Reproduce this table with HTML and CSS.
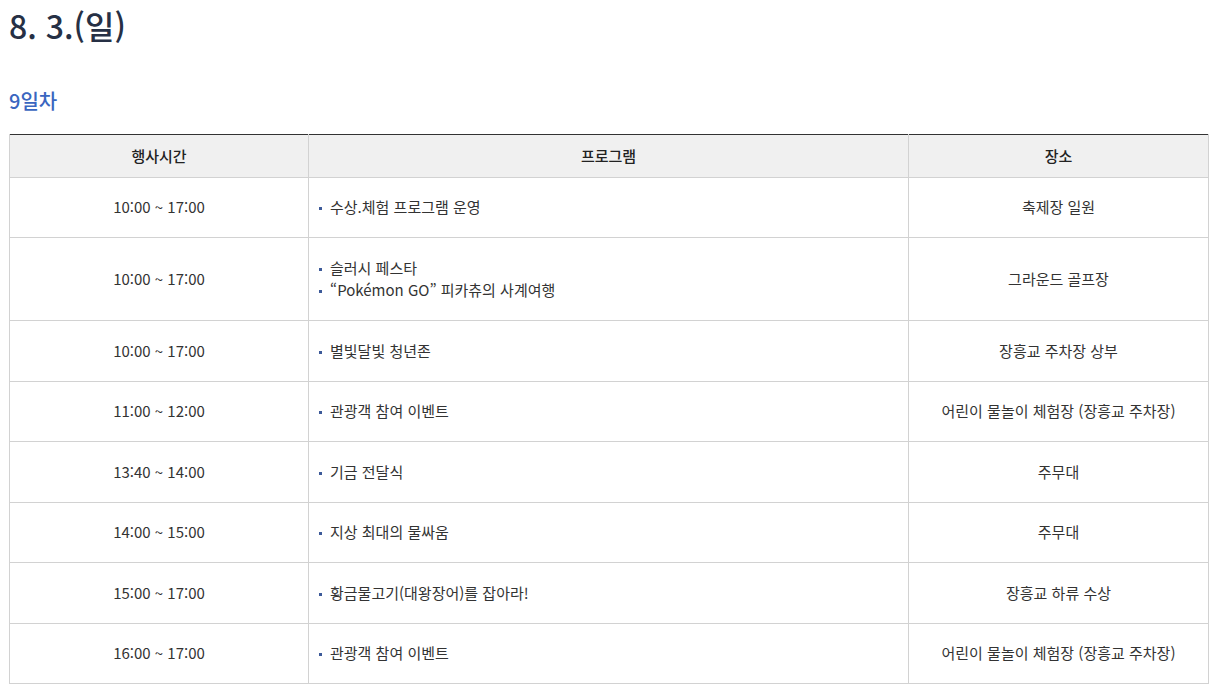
FILE: index.html
```html
<!DOCTYPE html>
<html lang="ko">
<head>
  <meta charset="UTF-8" />
  <title>8. 3.(일) 프로그램</title>
  <link rel="stylesheet" href="styles.css">
</head>
<body>

  <h2 class="dia">8. 3.(일)</h2>
  <h3 class="dia-sub">9일차</h3>

  <table class="tbl">
    <colgroup>
      <col class="c-time">
      <col class="c-prog">
      <col class="c-place">
    </colgroup>
    <thead>
      <tr>
        <th>행사시간</th>
        <th>프로그램</th>
        <th>장소</th>
      </tr>
    </thead>
    <tbody>
      <tr>
        <td>10:00 ~ 17:00</td>
        <td class="prog">
          <ul><li>수상.체험 프로그램 운영</li></ul>
        </td>
        <td>축제장 일원</td>
      </tr>
      <tr>
        <td>10:00 ~ 17:00</td>
        <td class="prog">
          <ul>
            <li>슬러시 페스타</li>
            <li>“Pokémon GO” 피카츄의 사계여행</li>
          </ul>
        </td>
        <td>그라운드 골프장</td>
      </tr>
      <tr>
        <td>10:00 ~ 17:00</td>
        <td class="prog"><ul><li>별빛달빛 청년존</li></ul></td>
        <td>장흥교 주차장 상부</td>
      </tr>
      <tr>
        <td>11:00 ~ 12:00</td>
        <td class="prog"><ul><li>관광객 참여 이벤트</li></ul></td>
        <td>어린이 물놀이 체험장 (장흥교 주차장)</td>
      </tr>
      <tr>
        <td>13:40 ~ 14:00</td>
        <td class="prog"><ul><li>기금 전달식</li></ul></td>
        <td>주무대</td>
      </tr>
      <tr>
        <td>14:00 ~ 15:00</td>
        <td class="prog"><ul><li>지상 최대의 물싸움</li></ul></td>
        <td>주무대</td>
      </tr>
      <tr>
        <td>15:00 ~ 17:00</td>
        <td class="prog"><ul><li>황금물고기(대왕장어)를 잡아라!</li></ul></td>
        <td>장흥교 하류 수상</td>
      </tr>
      <tr>
        <td>16:00 ~ 17:00</td>
        <td class="prog"><ul><li>관광객 참여 이벤트</li></ul></td>
        <td>어린이 물놀이 체험장 (장흥교 주차장)</td>
      </tr>
    </tbody>
  </table>

</body>
</html>
```

FILE: styles.css
```css
html, body {
  margin: 0;
  padding: 0;
  background: #fff;
  color: #333;
  font-family: "Noto Sans CJK KR", "Noto Sans", sans-serif;
}

body {
  padding: 0 4px 0 9px;
}

.dia {
  margin: 0;
  padding-top: 2px;
  font-size: 32px;
  font-weight: 500;
  line-height: 46px;
  color: #263045;
}

.dia-sub {
  margin: 38px 0 0;
  font-size: 20px;
  font-weight: 500;
  line-height: 30px;
  color: #3a66c0;
}

.tbl {
  width: 1199px;
  margin-top: 18px;
  border-collapse: collapse;
  table-layout: fixed;
  border-top: 1px solid #333;
  font-size: 15px;
  line-height: 22.5px;
}

.c-time { width: 299px; }
.c-prog { width: 600px; }
.c-place { width: 300px; }

.tbl th {
  background: #f0f0f0;
  font-weight: 500;
  color: #222;
  padding: 9.5px 8px;
  border: 1px solid #d2d2d2;
  border-top: none;
}

.tbl td {
  padding: 18.5px 8px;
  border: 1px solid #d2d2d2;
  text-align: center;
  vertical-align: middle;
}

.tbl td.prog {
  text-align: left;
  padding-left: 9px;
}

.prog ul {
  list-style: none;
  margin: 0;
  padding: 0;
}

.prog li {
  position: relative;
  padding-left: 12px;
}

/* 작은 파란 사각 점 */
.prog li::before {
  content: "";
  position: absolute;
  left: 1px;
  top: 11px;
  width: 3px;
  height: 3px;
  background: #3d5a99;
}
```
